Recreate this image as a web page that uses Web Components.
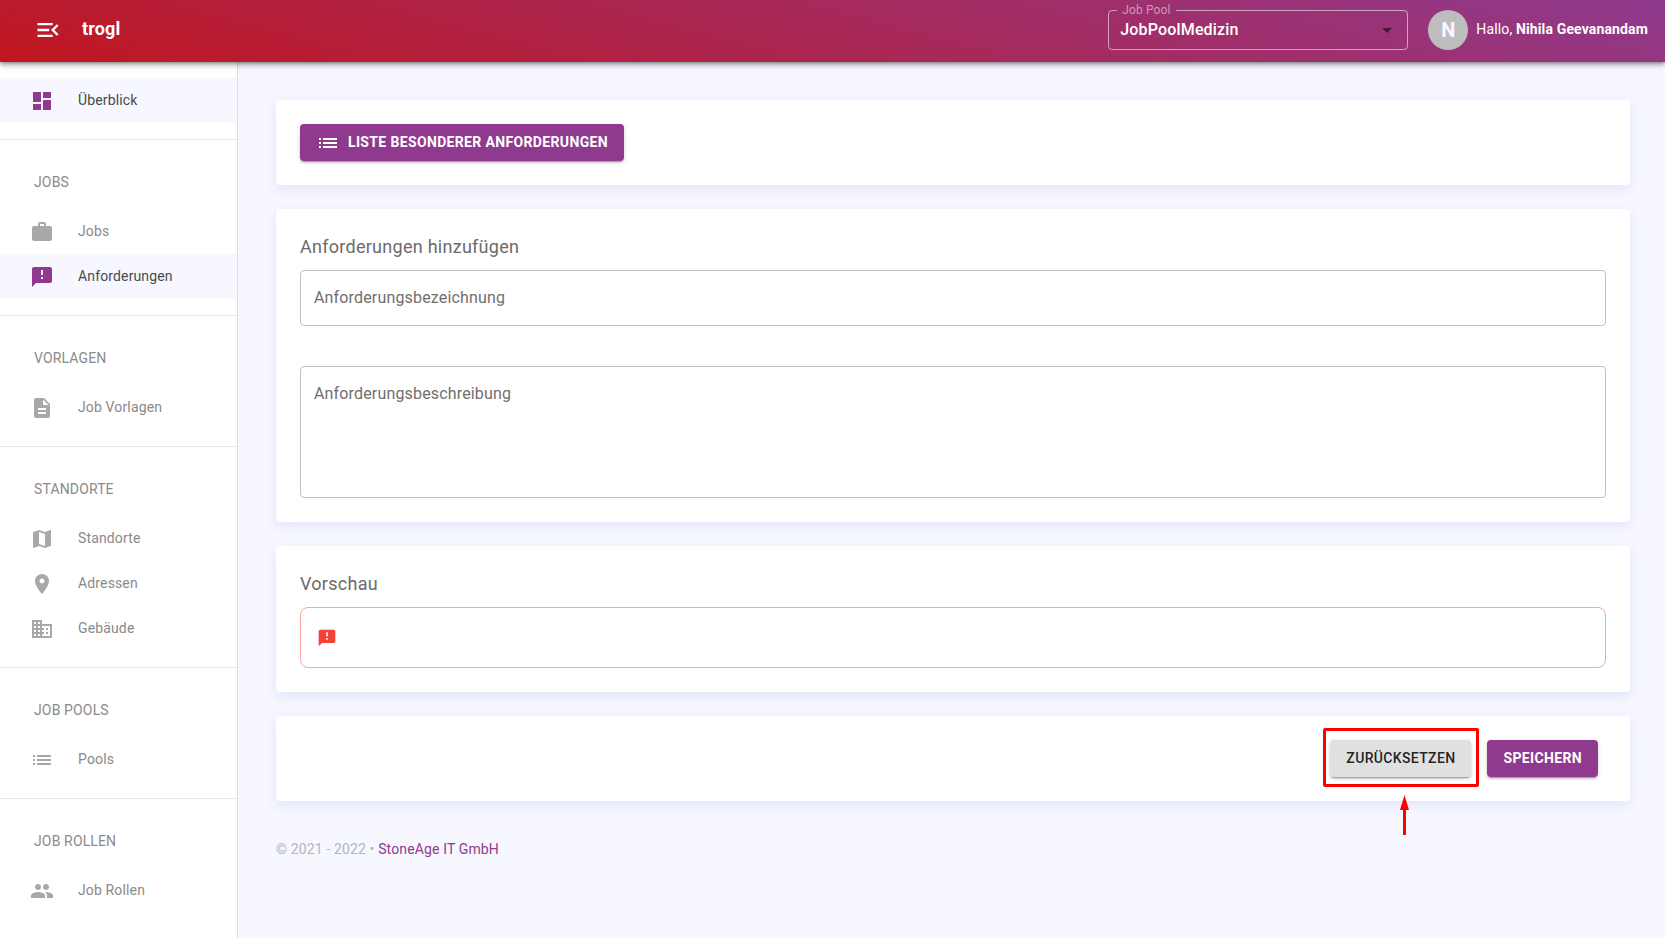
<!DOCTYPE html>
<html lang="de">
<head>
<meta charset="utf-8">
<meta name="viewport" content="width=device-width, initial-scale=1">
<title>trogl</title>
<style>
  html, body { margin: 0; min-height: 100%; }
  body {
    font: 14px/20px Roboto, "Liberation Sans", sans-serif;
    letter-spacing: 0.01em;
    background: #f6f7ff;
    --primary: #8f3a8e;
    --page: #f6f7ff;
  }
</style>
</head>
<body>
<trogl-app></trogl-app>
<script>
const ICONS = {
  menuOpen: 'M3 18h13v-2H3v2zm0-5h10v-2H3v2zm0-7v2h13V6H3zm18 9.59L17.42 12 21 8.41 19.59 7l-5 5 5 5L21 15.59z',
  dashboard: 'M3 13h8V3H3v10zm0 8h8v-6H3v6zm10 0h8V11h-8v10zm0-18v6h8V3h-8z',
  work: 'M20 6h-4V4c0-1.11-.89-2-2-2h-4c-1.11 0-2 .89-2 2v2H4c-1.11 0-1.99.89-1.99 2L2 19c0 1.11.89 2 2 2h16c1.11 0 2-.89 2-2V8c0-1.11-.89-2-2-2zm-6 0h-4V4h4v2z',
  feedback: 'M20 2H4c-1.1 0-1.99.9-1.99 2L2 22l4-4h14c1.1 0 2-.9 2-2V4c0-1.1-.9-2-2-2zm-7 12h-2v-2h2v2zm0-4h-2V5h2v5z',
  description: 'M14 2H6c-1.1 0-1.99.9-1.99 2L4 20c0 1.1.89 2 1.99 2H18c1.1 0 2-.9 2-2V8l-6-6zm2 16H8v-2h8v2zm0-4H8v-2h8v2zm-3-5V3.500L18.500 9H13z',
  map: 'M20.500 3l-.16.03L15 5.100 9 3 3.360 4.900c-.21.07-.36.25-.36.48V20.500c0 .28.22.5.5.5l.16-.03L9 18.900l6 2.100 5.640-1.900c.21-.07.36-.25.36-.48V3.500c0-.28-.22-.5-.5-.5zM15 19l-6-2.110V5l6 2.110V19z',
  place: 'M12 2C8.130 2 5 5.130 5 9c0 5.250 7 13 7 13s7-7.750 7-13c0-3.870-3.130-7-7-7zm0 9.500c-1.380 0-2.500-1.120-2.500-2.500s1.120-2.500 2.500-2.500 2.500 1.120 2.500 2.500-1.120 2.500-2.500 2.500z',
  business: 'M12 7V3H2v18h20V7H12zM6 19H4v-2h2v2zm0-4H4v-2h2v2zm0-4H4V9h2v2zm0-4H4V5h2v2zm4 12H8v-2h2v2zm0-4H8v-2h2v2zm0-4H8V9h2v2zm0-4H8V5h2v2zm10 12h-8v-2h2v-2h-2v-2h2v-2h-2V9h8v10zm-2-8h-2v2h2v-2zm0 4h-2v2h2v-2z',
  list: 'M3 13h2v-2H3v2zm0 4h2v-2H3v2zm0-8h2V7H3v2zm4 4h14v-2H7v2zm0 4h14v-2H7v2zM7 7v2h14V7H7z',
  people: 'M16 11c1.660 0 2.990-1.340 2.990-3S17.660 5 16 5s-3 1.340-3 3 1.340 3 3 3zm-8 0c1.660 0 2.990-1.340 2.990-3S9.660 5 8 5 5 6.340 5 8s1.340 3 3 3zm0 2c-2.330 0-7 1.170-7 3.500V19h14v-2.500c0-2.330-4.670-3.500-7-3.500zm8 0c-.29 0-.62.02-.97.05 1.160.84 1.970 1.970 1.970 3.450V19h6v-2.500c0-2.330-4.670-3.500-7-3.500z',
  arrowDown: 'M7 10l5 5 5-5z'
};

function define(name, html, setup) {
  const template = document.createElement('template');
  template.innerHTML = html;
  customElements.define(name, class extends HTMLElement {
    constructor() {
      super();
      this.attachShadow({ mode: 'open' });
    }
    connectedCallback() {
      if (this.shadowRoot.childNodes.length) return;
      this.shadowRoot.append(template.content.cloneNode(true));
      if (setup) setup(this, this.shadowRoot);
    }
  });
}

define('ui-icon', `
  <style>
    :host { display: block; flex: none; width: 24px; height: 24px; }
    svg { display: block; width: 100%; height: 100%; fill: currentColor; }
  </style>
  <svg viewBox="0 0 24 24" aria-hidden="true"><path/></svg>`,
  (el, root) => root.querySelector('path').setAttribute('d', ICONS[el.getAttribute('name')]));

define('ui-button', `
  <style>
    :host { display: block; }
    button {
      display: flex; align-items: center; gap: 8px; margin: 0; border: 0; border-radius: 4px;
      padding: 0 16px; height: 37px; cursor: pointer;
      font: 500 14px/24px Roboto, "Liberation Sans", sans-serif; text-transform: uppercase;
      letter-spacing: 0.025em;
      background: #e0e0e0; color: rgba(0,0,0,.87);
      box-shadow: 0 3px 1px -2px rgba(0,0,0,.2), 0 2px 2px 0 rgba(0,0,0,.14), 0 1px 5px 0 rgba(0,0,0,.12);
    }
    :host([primary]) button { background: var(--primary); color: #fff; font-weight: 700; }
    span { padding-bottom: 2px; }
  </style>
  <button type="button"><slot name="icon"></slot><span><slot></slot></span></button>`);

define('ui-card', `
  <style>
    :host {
      display: block; padding: 24px; background: #fff; border-radius: 4px;
      box-shadow: 0 4px 12px rgba(90,90,210,.12);
    }
    h2 { margin: 0; padding: 0 0 9px; font-size: 18px; line-height: 28px; font-weight: 400; color: #6b6b6b; letter-spacing: 0.015em; }
    h2:empty { display: none; }
  </style>
  <h2></h2><slot></slot>`,
  (el, root) => { root.querySelector('h2').textContent = el.getAttribute('heading') || ''; });

define('ui-field', `
  <style>
    :host { display: block; position: relative; }
    label {
      position: absolute; left: 14px; top: 16px; font-size: 16px; line-height: 24px;
      color: #6f6f6f; pointer-events: none; letter-spacing: 0.01em;
    }
    input, textarea {
      display: block; box-sizing: border-box; width: 100%; height: 56px; margin: 0; padding: 16px 13px;
      border: 1px solid #c0c0c0; border-radius: 4px; background: transparent;
      font: 16px/24px Roboto, "Liberation Sans", sans-serif; color: #222; resize: none; outline: none;
    }
    textarea { height: 132px; }
    :is(input, textarea):focus { border-color: var(--primary); }
    :is(input, textarea):not(:placeholder-shown) ~ label { display: none; }
  </style>`,
  (el, root) => {
    const control = document.createElement(el.hasAttribute('multiline') ? 'textarea' : 'input');
    control.id = 'control';
    control.placeholder = ' ';
    const label = document.createElement('label');
    label.htmlFor = 'control';
    label.textContent = el.getAttribute('label');
    root.append(control, label);
  });

define('pool-select', `
  <style>
    :host { display: block; position: relative; width: 300px; height: 40px; color: #fff; }
    fieldset {
      position: absolute; inset: -6px 0 0; margin: 0; padding: 0 8px; min-width: 0;
      border: 1px solid rgba(255,255,255,.55); border-radius: 4px; pointer-events: none;
    }
    legend { padding: 0 5px; font-size: 12px; line-height: 12px; color: rgba(255,255,255,.5); letter-spacing: 0.01em; }
    select {
      display: block; box-sizing: border-box; width: 100%; height: 40px; margin: 0; padding: 0 32px 0 12px;
      border: 0; background: none; appearance: none; outline: none; color: #fff;
      font: 500 16px/24px Roboto, "Liberation Sans", sans-serif; letter-spacing: 0.01em;
    }
    option { color: #222; }
    ui-icon { position: absolute; right: 9px; top: 8px; color: rgba(0,0,0,.54); pointer-events: none; }
  </style>
  <select id="pool" aria-labelledby="pool-label"><option>JobPoolMedizin</option></select>
  <fieldset><legend><label id="pool-label" for="pool">Job Pool</label></legend></fieldset>
  <ui-icon name="arrowDown"></ui-icon>`);

define('app-header', `
  <style>
    :host {
      display: flex; align-items: center; box-sizing: border-box; height: 62px; padding: 0 17px 2px 34px;
      position: relative; z-index: 1; color: #fff;
      background: linear-gradient(15deg, #c1161f, var(--primary));
      box-shadow: 0 2px 4px -1px rgba(0,0,0,.2), 0 4px 5px 0 rgba(0,0,0,.14), 0 1px 10px 0 rgba(0,0,0,.12), 0 0 4px rgba(0,0,0,.3);
    }
    .menu { border: 0; padding: 0; margin: 0; background: none; color: inherit; cursor: pointer; }
    .menu ui-icon { width: 28px; height: 28px; }
    h1 { margin: 0 auto 0 20px; padding-bottom: 2px; font-size: 18px; line-height: 28px; font-weight: 700; }
    .avatar {
      display: grid; place-items: center; width: 40px; height: 40px; margin: 0 8px 0 20px;
      border-radius: 50%; background: #bdbdbd; color: #f6f7ff; font-size: 20px; line-height: 28px; font-weight: 700;
    }
    .user { font-size: 14px; line-height: 20px; padding-bottom: 2px; white-space: nowrap; }
  </style>
  <button class="menu" type="button" aria-label="Menü"><ui-icon name="menuOpen"></ui-icon></button>
  <h1>trogl</h1>
  <pool-select></pool-select>
  <div class="avatar">N</div>
  <div class="user">Hallo, <b>Nihila Geevanandam</b></div>`);

define('nav-section', `
  <style>
    :host { display: block; padding: 16px 0; border-bottom: 1px solid #e8e8e8; }
    :host(:last-of-type) { border-bottom: 0; }
    h2 { margin: 0; padding: 0 34px; font-size: 14px; line-height: 53px; font-weight: 400; color: #8a8a8a; text-transform: uppercase; }
    h2:empty { display: none; }
  </style>
  <h2></h2><slot></slot>`,
  (el, root) => { root.querySelector('h2').textContent = el.getAttribute('heading') || ''; });

define('nav-item', `
  <style>
    :host { display: block; }
    a {
      display: flex; align-items: center; gap: 24px; height: 45px; padding: 0 30px;
      color: #8a8a8a; text-decoration: none;
    }
    ui-icon { color: #a8a8a8; }
    span { padding-bottom: 2px; }
    :host([active]) a { background: var(--page); color: #4a4a4a; }
    :host([active]) ui-icon { color: var(--primary); }
  </style>
  <a href="#"><span><slot></slot></span></a>`,
  (el, root) => {
    const icon = document.createElement('ui-icon');
    icon.setAttribute('name', el.getAttribute('icon'));
    root.querySelector('a').prepend(icon);
  });

define('app-sidebar', `
  <style>
    :host { display: block; box-sizing: border-box; width: 238px; flex: none; background: #fff; border-right: 1px solid #dcdce6; }
  </style>
  <nav>
    <nav-section><nav-item icon="dashboard" active>Überblick</nav-item></nav-section>
    <nav-section heading="Jobs">
      <nav-item icon="work">Jobs</nav-item>
      <nav-item icon="feedback" active>Anforderungen</nav-item>
    </nav-section>
    <nav-section heading="Vorlagen"><nav-item icon="description">Job Vorlagen</nav-item></nav-section>
    <nav-section heading="Standorte">
      <nav-item icon="map">Standorte</nav-item>
      <nav-item icon="place">Adressen</nav-item>
      <nav-item icon="business">Gebäude</nav-item>
    </nav-section>
    <nav-section heading="Job Pools"><nav-item icon="list">Pools</nav-item></nav-section>
    <nav-section heading="Job Rollen"><nav-item icon="people">Job Rollen</nav-item></nav-section>
  </nav>`);

define('callout-frame', `
  <style>
    :host { display: block; position: relative; }
    .frame { position: absolute; inset: -12px -8px -10px -7px; border: 3px solid #f00; border-radius: 2px; pointer-events: none; }
    svg { position: absolute; left: 50%; top: 100%; margin: 18px 0 0 -1px; width: 9px; height: 40px; fill: #f00; pointer-events: none; }
  </style>
  <slot></slot>
  <div class="frame"></div>
  <svg viewBox="0 0 9 40" aria-hidden="true"><path d="M4.500 0L9 15H6v25H3V15H0z"/></svg>`);

define('app-footer', `
  <style>
    :host { display: block; color: #b4b4bc; font-size: 14px; line-height: 20px; }
    a { color: var(--primary); text-decoration: none; }
  </style>
  © 2021 - 2022 • <a href="#">StoneAge IT GmbH</a>`);

define('trogl-app', `
  <style>
    :host { display: flex; flex-direction: column; min-height: 100vh; }
    .body { display: flex; flex: 1; }
    main { flex: 1; min-width: 0; display: flex; flex-direction: column; gap: 24px; padding: 38px 35px 38px 38px; }
    .fields { display: flex; flex-direction: column; gap: 40px; }
    .toolbar { display: flex; }
    .preview { display: flex; align-items: center; box-sizing: border-box; height: 61px; padding: 0 16px; border: 1px solid #faa6a6; border-radius: 8px; color: #f44336; }
    .preview ui-icon { width: 20px; height: 20px; }
    .actions { display: flex; justify-content: flex-end; gap: 16px; padding-right: 8px; }
    app-footer { margin-top: 14px; }
  </style>
  <app-header></app-header>
  <div class="body">
    <app-sidebar></app-sidebar>
    <main>
      <ui-card><div class="toolbar"><ui-button primary><ui-icon slot="icon" name="list"></ui-icon>Liste besonderer Anforderungen</ui-button></div></ui-card>
      <ui-card heading="Anforderungen hinzufügen">
        <div class="fields">
          <ui-field label="Anforderungsbezeichnung"></ui-field>
          <ui-field label="Anforderungsbeschreibung" multiline></ui-field>
        </div>
      </ui-card>
      <ui-card heading="Vorschau"><div class="preview"><ui-icon name="feedback"></ui-icon></div></ui-card>
      <ui-card>
        <div class="actions">
          <callout-frame><ui-button>Zurücksetzen</ui-button></callout-frame>
          <ui-button primary>Speichern</ui-button>
        </div>
      </ui-card>
      <app-footer></app-footer>
    </main>
  </div>`);
</script>
</body>
</html>
